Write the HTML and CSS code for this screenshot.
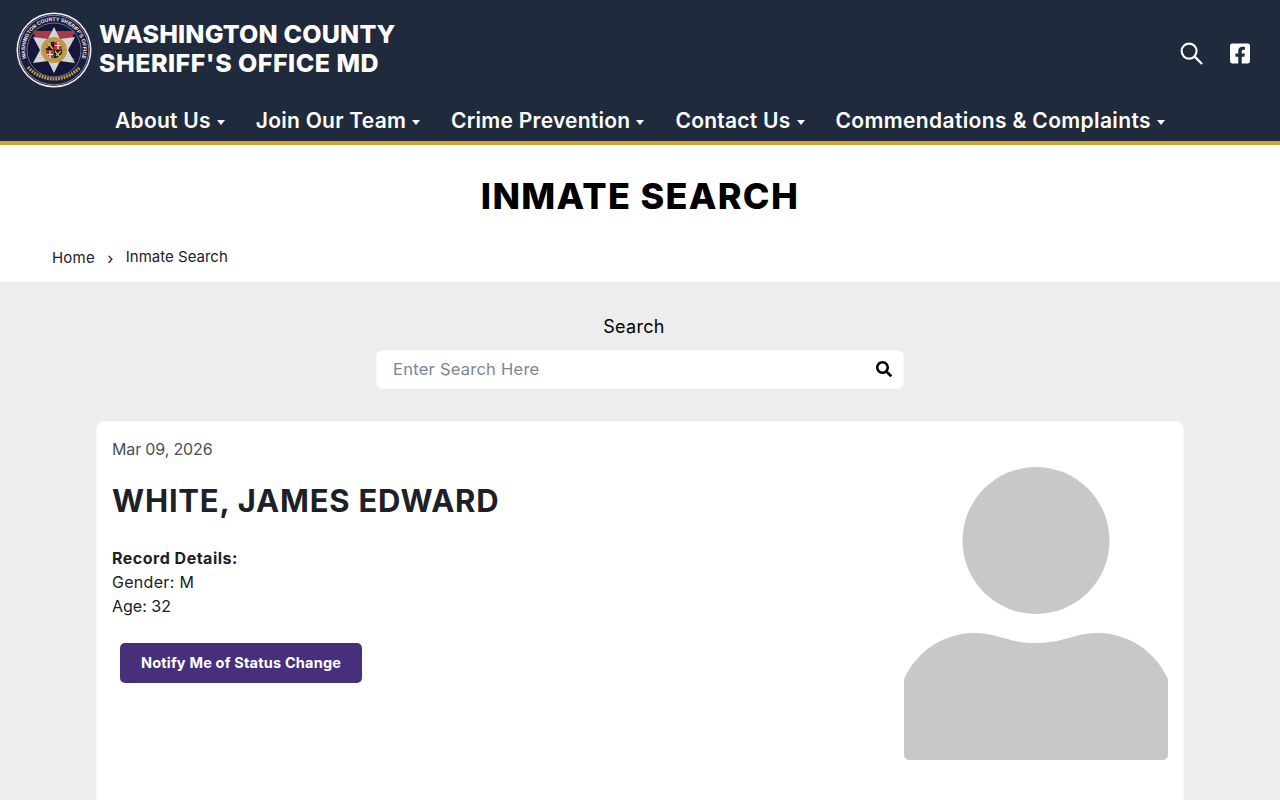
FILE: index.html
```html
<!DOCTYPE html>
<html lang="en">
<head>
<meta charset="utf-8">
<title>Inmate Search</title>
<link rel="stylesheet" href="styles.css">
</head>
<body>
<div class="page">
<header class="header">
  <div class="top">
    <a class="brand">
      <svg class="seal" viewBox="0 0 76 76" aria-hidden="true">
        <defs><path id="ring" d="M15.300 56A29 29 0 1 1 60.700 56"/></defs>
        <circle cx="38" cy="38" r="37.500" fill="#f3f3f6"/>
        <circle cx="38" cy="38" r="36" fill="#1a1c3d"/>
        <circle cx="38" cy="38" r="34.800" fill="none" stroke="#e8e8ee" stroke-width=".5"/>
        <circle cx="38" cy="38" r="27" fill="#14163a" stroke="#c9c9d2" stroke-width=".5"/>
        <text class="seal-text"><textPath href="#ring" startOffset="50%" text-anchor="middle">WASHINGTON COUNTY SHERIFF'S OFFICE</textPath></text>
        <path d="M17 19H59L53 33L52 43L59 47L54 50L47 40H29L22 33Z" fill="#a83a48"/>
        <path d="M38 15L44 27L59 25L52 38L59 51L44 49L38 61L32 49L17 51L24 38L17 25L32 27Z" fill="#d4d4d8"/>
        <circle cx="38" cy="38" r="13" fill="#b99a45"/>
        <circle cx="38" cy="38" r="8.500" fill="#f2efe4"/>
        <path d="M38 29.500A8.500 8.500 0 0 0 29.500 38H38Z" fill="#1b1b1b"/>
        <path d="M38 46.500A8.500 8.500 0 0 0 46.500 38H38Z" fill="#1b1b1b"/>
        <path d="M38 29.500A8.500 8.500 0 0 1 46.500 38H38Z" fill="#b8323c"/>
        <path d="M38 46.500A8.500 8.500 0 0 1 29.500 38H38Z" fill="#b8323c"/>
        <path d="M32 31L37 37M30 36L35 31M39 39L44 45M40 44L45 39" stroke="#e5c04b" stroke-width="1.300"/>
        <path d="M42 30V37M39 33.500H45M34 39V46M31 42.500H37" stroke="#f4f1e6" stroke-width="1.200"/>
        <path d="M12 55C19 63 29 67 38 67C47 67 57 63 64 55" fill="none" stroke="#c9a13c" stroke-width="3.200" stroke-dasharray="1.800 1"/>
      </svg>
      <span class="brand-name"><span class="brand-one">WASHINGTON COUNTY</span><span class="brand-two">SHERIFF'S OFFICE MD</span></span>
    </a>
    <div class="tools">
      <svg class="tool-search" viewBox="0 0 24 24" aria-hidden="true"><circle cx="9.500" cy="9.500" r="7.800" fill="none" stroke="#fff" stroke-width="2.200"/><path d="M15.300 15.300L23 23" stroke="#fff" stroke-width="2.400" fill="none"/></svg>
      <svg class="tool-fb" viewBox="0 0 448 512" aria-hidden="true"><path fill="#fff" d="M400 32H48A48 48 0 0 0 0 80v352a48 48 0 0 0 48 48h137.250V327.690h-63V256h63v-54.640c0-62.150 37-96.480 93.670-96.480 27.140 0 55.520 4.840 55.520 4.840v61h-31.270c-30.810 0-40.420 19.120-40.420 38.730V256h68.780l-11 71.690h-57.780V480H400a48 48 0 0 0 48-48V80a48 48 0 0 0-48-48z"/></svg>
    </div>
  </div>
  <nav class="nav">
    <a class="nav-item">About Us<i class="caret"></i></a>
    <a class="nav-item">Join Our Team<i class="caret"></i></a>
    <a class="nav-item">Crime Prevention<i class="caret"></i></a>
    <a class="nav-item">Contact Us<i class="caret"></i></a>
    <a class="nav-item nav-item-long">Commendations &amp; Complaints<i class="caret"></i></a>
  </nav>
</header>
<section class="title-band">
  <h1 class="title">INMATE SEARCH</h1>
  <div class="crumbs"><a class="crumb-home">Home</a><span class="crumb-sep">›</span><span class="crumb-now">Inmate Search</span></div>
</section>
<main class="content">
  <div class="search">
    <label class="search-label">Search</label>
    <div class="search-box">
      <span class="search-ph">Enter Search Here</span>
      <svg class="search-icon" viewBox="0 0 512 512" aria-hidden="true"><path d="M505 442.700L405.300 343c-4.500-4.500-10.600-7-17-7H372c27.600-35.300 44-79.700 44-128C416 93.100 322.900 0 208 0S0 93.100 0 208s93.100 208 208 208c48.300 0 92.700-16.400 128-44v16.300c0 6.400 2.500 12.500 7 17l99.700 99.700c9.400 9.400 24.600 9.400 33.900 0l28.300-28.300c9.400-9.400 9.400-24.600.1-34zM208 336c-70.700 0-128-57.200-128-128 0-70.700 57.200-128 128-128 70.700 0 128 57.200 128 128 0 70.700-57.200 128-128 128z"/></svg>
    </div>
  </div>
  <article class="card">
    <div class="info">
      <div class="date">Mar 09, 2026</div>
      <h2 class="name">WHITE, JAMES EDWARD</h2>
      <div class="details">
        <div class="details-head">Record Details:</div>
        <div class="details-line">Gender: M</div>
        <div>Age: 32</div>
      </div>
      <button class="notify">Notify Me of Status Change</button>
    </div>
    <svg class="photo" viewBox="0 0 264 294" aria-hidden="true">
      <circle cx="132" cy="73.500" r="73.500" fill="#c8c8c8"/>
      <path d="M0 212C14 182 42 166 70 166C94 166 104 176 132 176C160 176 170 166 194 166C222 166 250 182 264 212V287Q264 293 258 293H6Q0 293 0 287Z" fill="#c8c8c8"/>
    </svg>
  </article>
</main>
</div>
</body>
</html>
```
FILE: styles.css
```css
* { box-sizing: border-box; }
html, body { margin: 0; padding: 0; }
body { font-family: Inter, "Open Sans", "Liberation Sans", sans-serif; color: #1c2128; background: #ededed; }
.page { height: 800px; overflow: hidden; display: flex; flex-direction: column; }

.header { background: #1f2a3d; border-bottom: 4px solid #cfa637; height: 145px; flex: none; }
.top { height: 97px; display: flex; justify-content: space-between; align-items: center; padding: 10px 30px 8px 16px; }
.brand { display: flex; align-items: center; gap: 7px; color: #fff; }
.seal { width: 76px; height: 76px; display: block; flex: none; }
.seal-text { font: 700 5.200px "Liberation Sans", sans-serif; fill: #f2f2f2; }
.brand-name { font-size: 25px; line-height: 29px; font-weight: 800; margin-bottom: 1px; }
.brand-one { display: block; letter-spacing: .16px; }
.brand-two { display: block; letter-spacing: .48px; }
.tools { display: flex; align-items: center; gap: 27px; margin-top: 8px; }
.tool-search { width: 23px; height: 23px; display: block; }
.tool-fb { width: 20px; height: 23px; display: block; }

.nav { display: flex; justify-content: center; gap: 31px; height: 44px; padding-top: 4px; }
.nav-item { color: #fff; font-size: 21px; font-weight: 600; line-height: 30px; display: flex; align-items: center; letter-spacing: .25px; }
.nav-item-long { letter-spacing: .36px; }
.caret { display: block; width: 0; height: 0; margin: 2px 0 0 6px; border-left: 4px solid transparent; border-right: 4px solid transparent; border-top: 5px solid #fff; }

.title-band { background: #fff; height: 137px; flex: none; padding-top: 30px; }
.title { margin: 0; text-align: center; font-size: 36px; line-height: 42px; font-weight: 800; color: #000; letter-spacing: 1.3px; }
.crumbs { display: flex; align-items: center; margin-top: 30px; padding-left: 52px; font-size: 15px; line-height: 20px; color: #1c2128; }
.crumb-home { position: relative; top: 1px; letter-spacing: .2px; }
.crumb-sep { width: 31px; text-align: center; font-size: 16px; position: relative; top: 1px; }

.content { flex: 1; padding: 33px 96px 0; min-height: 0; }
.search { display: flex; flex-direction: column; align-items: center; }
.search-label { font-size: 18px; line-height: 24px; color: #000; margin: 0 12px 11px 0; letter-spacing: .3px; }
.search-box { width: 528px; height: 39px; background: #fff; border: 1px solid #f8f8f8; border-radius: 6px; display: flex; align-items: center; justify-content: space-between; padding: 0 11px 2px 16px; }
.search-ph { font-size: 16.500px; color: #7d8594; letter-spacing: .25px; }
.search-icon { width: 16px; height: 16px; display: block; }

.card { margin-top: 32px; height: 500px; background: #fff; border: 1px solid #fafafa; border-radius: 8px; padding: 15px 15px; display: flex; justify-content: space-between; align-items: flex-start; }
.date { font-size: 16px; line-height: 24px; color: #4a4f58; letter-spacing: -.15px; }
.name { margin: 22px 0 0; font-size: 31px; line-height: 36px; font-weight: 700; color: #1c2128; letter-spacing: .78px; }
.details { margin-top: 27px; font-size: 16px; line-height: 24px; }
.details-head { font-weight: 700; letter-spacing: .5px; }
.details-line { letter-spacing: .3px; }
.notify { display: block; margin: 25px 0 0 8px; width: 242px; height: 40px; border: 0; border-radius: 5px; background: #46307c; color: #fff; font: 700 14.500px Inter, sans-serif; letter-spacing: .2px; padding: 0 0 2px; }
.photo { width: 264px; height: 294px; margin-top: 30px; flex: none; display: block; filter: blur(.5px); }
```
